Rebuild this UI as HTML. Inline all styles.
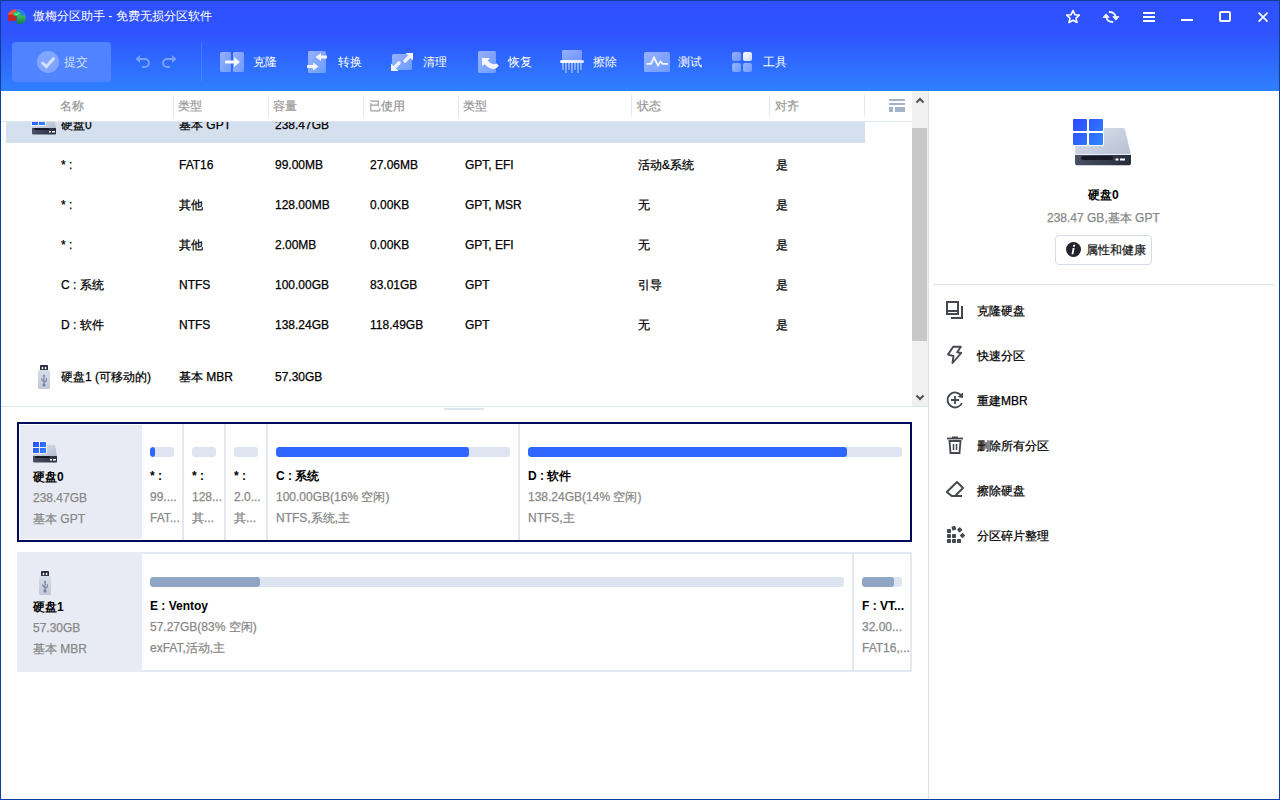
<!DOCTYPE html><html><head><meta charset="utf-8"><style>
*{box-sizing:border-box}
html,body{margin:0;padding:0;width:1280px;height:800px;overflow:hidden;background:#fff}
body{font-family:"Liberation Sans",sans-serif;font-size:12px;color:#1a1a1a;position:relative}
.a{position:absolute;white-space:nowrap;line-height:14px;-webkit-text-stroke-width:0.25px}
svg{position:absolute;overflow:visible}
#top{position:absolute;left:0;top:0;width:1280px;height:91px;background:linear-gradient(180deg,#2f50ff 0px,#2f53ff 32px,#2e80ff 91px)}
#bd{position:absolute;left:0;top:0;width:1280px;height:800px;border:1px solid #0b3f9f;z-index:50}
.tb{color:#fff;-webkit-text-stroke-width:0}
.hd{color:#9a9a9a}
.c{color:#000}
.hs{position:absolute;top:95px;width:1px;height:22px;background:#e3e8ef}
.card{position:absolute;left:17px;width:895px;height:120px}
.lp{position:absolute;background:#e8ebf3}
.sep{position:absolute;top:0;width:2px;height:120px;background:#e4e8f0}
.bar{position:absolute;top:25px;height:10px;border-radius:3px;background:#dfe5f0;overflow:hidden}
.bar i{position:absolute;left:0;top:0;bottom:0;border-radius:3px;background:#2f66ff}
.bar.g i{background:#8fa5c4}
.pn{position:absolute;font-weight:bold;color:#000;-webkit-text-stroke-width:0}
.ps{position:absolute;color:#888}
.mi{position:absolute;left:977px;color:#000}
</style></head><body>
<div id="top"></div><div id="bd"></div>
<svg width="0" height="0" style="position:absolute"><defs><linearGradient id="ti" x1="0" y1="0" x2="1" y2="1"><stop offset="0" stop-color="#fff" stop-opacity="0.5"/><stop offset="1" stop-color="#fff" stop-opacity="0.3"/></linearGradient><linearGradient id="tw" x1="0" y1="0" x2="1" y2="1"><stop offset="0" stop-color="#fff"/><stop offset="1" stop-color="#c8d6ff"/></linearGradient><linearGradient id="tb2" x1="0" y1="0" x2="1" y2="0"><stop offset="0" stop-color="#fff"/><stop offset="1" stop-color="#dde6ff"/></linearGradient></defs></svg>
<svg style="left:7px;top:8px" width="20" height="18" viewBox="0 0 20 18">
<defs><linearGradient id="lg" x1="0" y1="0" x2="0" y2="1"><stop offset="0" stop-color="#35c060"/><stop offset="1" stop-color="#17773a"/></linearGradient></defs>
<path d="M1 6 C2 3 6 1.3 9.5 1 L9.5 8 L1 8 Z" fill="#ff4a40"/>
<path d="M1 6.5 L9.5 7 L9.5 12.5 L1 13.5 Z" fill="#c0292a"/>
<path d="M9.5 1 C14 1 18 3 18.5 6.5 L18.5 8 L9.5 8 Z" fill="#2a7ee8"/>
<path d="M10 7.5 L18.5 7.5 L18.5 12.5 C17 15 14 16 10 16.5 Z" fill="url(#lg)"/>
<ellipse cx="10" cy="5.8" rx="4" ry="2.4" fill="#22c45c"/>
<path d="M8.2 5.9 L9.6 6.9 L11.6 4.9" stroke="#e0ffe6" stroke-width="0.9" fill="none"/>
</svg>
<div class="a tb" style="left:33px;top:9px">傲梅分区助手 - 免费无损分区软件</div>
<svg style="left:1064px;top:8px" width="18" height="18" viewBox="0 0 18 18">
<path d="M9 2.6 L10.9 6.7 L15.3 7.1 L12 10.1 L13 14.5 L9 12.2 L5 14.5 L6 10.1 L2.7 7.1 L7.1 6.7 Z" fill="none" stroke="#fff" stroke-width="1.6" stroke-linejoin="round"/>
</svg>
<svg style="left:1098px;top:6px" width="26" height="22" viewBox="0 0 26 22">
<path d="M11.5 6 A6.5 6.5 0 0 1 17.8 11" fill="none" stroke="#f0f2ff" stroke-width="1.8" stroke-linecap="round"/>
<path d="M14.8 10.6 L21 10.6 L17.9 14.2 Z" fill="#f0f2ff" stroke="#f0f2ff" stroke-width="0.8" stroke-linejoin="round"/>
<path d="M14.5 16 A6.5 6.5 0 0 1 8.2 11" fill="none" stroke="#f0f2ff" stroke-width="1.8" stroke-linecap="round"/>
<path d="M5 11.4 L11.2 11.4 L8.1 7.8 Z" fill="#f0f2ff" stroke="#f0f2ff" stroke-width="0.8" stroke-linejoin="round"/>
</svg>
<div class="a" style="left:1143px;top:12px;width:12px;height:2px;background:#fff"></div>
<div class="a" style="left:1143px;top:16px;width:12px;height:2px;background:#fff"></div>
<div class="a" style="left:1143px;top:20px;width:12px;height:2px;background:#fff"></div>
<div class="a" style="left:1181px;top:19px;width:12px;height:2px;background:#fff"></div>
<div class="a" style="left:1219px;top:11px;width:12px;height:11px;border:2px solid #f4f5ff;border-radius:2px"></div>
<svg style="left:1257px;top:11px" width="12" height="12" viewBox="0 0 12 12">
<path d="M1.6 1.6 L10.6 10.6 M10.6 1.6 L1.6 10.6" stroke="#f4f5ff" stroke-width="1.8"/></svg>
<div class="a" style="left:12px;top:42px;width:99px;height:40px;border-radius:4px;background:#4f83ff"></div>
<svg style="left:37px;top:51px" width="22" height="22" viewBox="0 0 22 22">
<circle cx="11" cy="11" r="11" fill="#80a5ff"/>
<path d="M4.8 11.4 L9.4 15.6 L17.4 6.8" fill="none" stroke="#d2dfff" stroke-width="3"/>
</svg>
<div class="a tb" style="left:64px;top:55px;color:#d4e0ff">提交</div>
<svg style="left:135px;top:54px" width="16" height="14" viewBox="0 0 16 14">
<path d="M4 5 L10 5 A4 4 0 0 1 10 13 L7 13" fill="none" stroke="#77a0ff" stroke-width="2"/>
<path d="M0.5 5 L5 1 L5 9 Z" fill="#77a0ff"/></svg>
<svg style="left:161px;top:54px" width="16" height="14" viewBox="0 0 16 14">
<path d="M12 5 L6 5 A4 4 0 0 0 6 13 L9 13" fill="none" stroke="#77a0ff" stroke-width="2"/>
<path d="M15.5 5 L11 1 L11 9 Z" fill="#77a0ff"/></svg>
<div class="a" style="left:201px;top:42px;width:1px;height:39px;background:rgba(255,255,255,0.13)"></div>
<svg style="left:220px;top:52px" width="25" height="20" viewBox="0 0 25 20">
<rect x="0" y="0" width="11" height="20" rx="1.5" fill="url(#ti)"/>
<rect x="13" y="0" width="11" height="20" rx="1.5" fill="url(#ti)"/>
<path d="M5 8.5 L14 8.5 L14 5 L20 10 L14 15 L14 11.5 L5 11.5 Z" fill="#f4f6ff"/></svg>
<div class="a tb" style="left:253px;top:55px">克隆</div>
<svg style="left:307px;top:51px" width="22" height="22" viewBox="0 0 22 22">
<rect x="1" y="0" width="18" height="22" rx="1.5" fill="url(#ti)"/>
<path d="M20 4.5 L14 4.5 L14 2 L8.5 6 L14 10 L14 7.5 L20 7.5 Z" fill="#f4f6ff"/>
<path d="M0 14 L6 14 L6 11.5 L11.5 15.5 L6 19.5 L6 17 L0 17 Z" fill="#f4f6ff"/></svg>
<div class="a tb" style="left:338px;top:55px">转换</div>
<svg style="left:391px;top:52px" width="23" height="20" viewBox="0 0 23 20">
<rect x="1" y="2" width="20" height="16" rx="1.5" fill="url(#ti)"/>
<path d="M22 1 L22 8.5 L14.5 1 Z" fill="#f4f6ff"/>
<path d="M18.5 4.5 L14 9" stroke="#eaeefe" stroke-width="3.6" stroke-linecap="round"/>
<path d="M0 19 L0 11.5 L7.5 19 Z" fill="#f4f6ff"/>
<path d="M3.5 15.5 L8 11" stroke="#eaeefe" stroke-width="3.6" stroke-linecap="round"/></svg>
<div class="a tb" style="left:423px;top:55px">清理</div>
<svg style="left:478px;top:51px" width="22" height="22" viewBox="0 0 22 22">
<rect x="0" y="0" width="18" height="22" rx="1.5" fill="url(#ti)"/>
<path d="M4 7 L12 7 L9.8 9.6 C12 12.5 15 14.2 18.6 12.4 L20.8 14.8 C18 19 12 19.5 7 13.2 L4 15 Z" fill="#f4f6ff"/></svg>
<div class="a tb" style="left:508px;top:55px">恢复</div>
<svg style="left:560px;top:50px" width="24" height="24" viewBox="0 0 24 24">
<rect x="2" y="0" width="20" height="10" rx="1.5" fill="url(#ti)"/>
<rect x="0" y="10" width="24" height="3" rx="1.5" fill="url(#tb2)"/>
<g fill="url(#ti)"><rect x="2" y="13" width="2" height="7"/><rect x="5" y="13" width="2" height="10"/><rect x="8" y="13" width="2" height="7"/><rect x="11" y="13" width="2" height="10"/><rect x="14" y="13" width="2" height="7"/><rect x="17" y="13" width="2" height="10"/><rect x="20" y="13" width="2" height="7"/></g></svg>
<div class="a tb" style="left:593px;top:55px">擦除</div>
<svg style="left:644px;top:52px" width="26" height="20" viewBox="0 0 26 20">
<rect x="0" y="0" width="26" height="20" rx="1.5" fill="url(#ti)"/>
<path d="M2.5 11.8 L7 11.8 L10 5.5 L14 13.5 L16.5 9.5 L18.5 11.8 L24 11.8" fill="none" stroke="#f4f6ff" stroke-width="1.8"/></svg>
<div class="a tb" style="left:678px;top:55px">测试</div>
<svg style="left:732px;top:52px" width="20" height="20" viewBox="0 0 20 20">
<rect x="0" y="0" width="9" height="9" rx="2" fill="url(#ti)"/>
<rect x="11" y="0" width="9" height="9" rx="2" fill="url(#tw)"/>
<rect x="0" y="11" width="9" height="9" rx="2" fill="url(#ti)"/>
<rect x="11" y="11" width="9" height="9" rx="2" fill="url(#ti)"/></svg>
<div class="a tb" style="left:763px;top:55px">工具</div>
<div class="a" style="left:6px;top:104px;width:859px;height:39px;background:#d5e0ef"></div>
<svg style="left:32px;top:114px" width="25" height="21" viewBox="0 0 25 21">
<defs><linearGradient id="r0b" x1="0" y1="0" x2="1" y2="1"><stop offset="0" stop-color="#dfe3ec"/><stop offset="1" stop-color="#b3bcd0"/></linearGradient>
<linearGradient id="r0k" x1="0" y1="0" x2="1" y2="0"><stop offset="0" stop-color="#4a5063"/><stop offset="1" stop-color="#2a2f40"/></linearGradient>
<linearGradient id="r0w" gradientUnits="userSpaceOnUse" x1="0" y1="0" x2="13" y2="11"><stop offset="0" stop-color="#2b48ff"/><stop offset="1" stop-color="#3288ff"/></linearGradient></defs>
<path d="M2 3 L21 3 C22 3 22.2 3.5 22.4 4.5 L24 14 L0 14 L1 4.5 C1.1 3.5 1.5 3 2 3 Z" fill="url(#r0b)"/>
<path d="M0 14 L24 14 L24 19 C24 20 23.5 20.5 22.5 20.5 L1.5 20.5 C0.5 20.5 0 20 0 19 Z" fill="url(#r0k)"/>
<rect x="2" y="14" width="15" height="2" rx="1" fill="#161a26"/>
<rect x="17" y="17" width="2" height="1.5" fill="#fff"/><rect x="20" y="17" width="3" height="1.5" fill="#fff"/>
<rect x="-1" y="-1" width="15" height="13" fill="#fff" opacity="0.6"/>
<g fill="url(#r0w)"><rect x="0" y="0" width="6" height="5"/><rect x="7" y="0" width="6" height="5"/>
<rect x="0" y="6" width="6" height="5"/><rect x="7" y="6" width="6" height="5"/></g>
</svg>
<div class="a c" style="left:61px;top:118px">硬盘0</div>
<div class="a c" style="left:179px;top:118px">基本 GPT</div>
<div class="a c" style="left:275px;top:118px">238.47GB</div>
<div class="a" style="left:1px;top:91px;width:911px;height:30px;background:#fff"></div>
<div class="a" style="left:1px;top:121px;width:910px;height:1px;background:#dfe5ee"></div>
<div class="a hd" style="left:60px;top:99px">名称</div>
<div class="a hd" style="left:178px;top:99px">类型</div>
<div class="a hd" style="left:273px;top:99px">容量</div>
<div class="a hd" style="left:369px;top:99px">已使用</div>
<div class="a hd" style="left:463px;top:99px">类型</div>
<div class="a hd" style="left:637px;top:99px">状态</div>
<div class="a hd" style="left:775px;top:99px">对齐</div>
<div class="hs" style="left:173px"></div>
<div class="hs" style="left:268px"></div>
<div class="hs" style="left:363px"></div>
<div class="hs" style="left:458px"></div>
<div class="hs" style="left:631px"></div>
<div class="hs" style="left:769px"></div>
<div class="hs" style="left:864px"></div>
<svg style="left:889px;top:99px" width="17" height="14" viewBox="0 0 17 14">
<g fill="#a5b3c9"><rect x="0" y="0" width="16" height="2"/><rect x="0" y="4" width="16" height="2"/><rect x="0" y="8" width="4" height="5"/><rect x="6" y="8" width="10" height="5"/></g></svg>
<div class="a c" style="left:61px;top:158px">* :</div>
<div class="a c" style="left:179px;top:158px">FAT16</div>
<div class="a c" style="left:275px;top:158px">99.00MB</div>
<div class="a c" style="left:370px;top:158px">27.06MB</div>
<div class="a c" style="left:465px;top:158px">GPT, EFI</div>
<div class="a c" style="left:638px;top:158px">活动&系统</div>
<div class="a c" style="left:776px;top:158px">是</div>
<div class="a c" style="left:61px;top:198px">* :</div>
<div class="a c" style="left:179px;top:198px">其他</div>
<div class="a c" style="left:275px;top:198px">128.00MB</div>
<div class="a c" style="left:370px;top:198px">0.00KB</div>
<div class="a c" style="left:465px;top:198px">GPT, MSR</div>
<div class="a c" style="left:638px;top:198px">无</div>
<div class="a c" style="left:776px;top:198px">是</div>
<div class="a c" style="left:61px;top:238px">* :</div>
<div class="a c" style="left:179px;top:238px">其他</div>
<div class="a c" style="left:275px;top:238px">2.00MB</div>
<div class="a c" style="left:370px;top:238px">0.00KB</div>
<div class="a c" style="left:465px;top:238px">GPT, EFI</div>
<div class="a c" style="left:638px;top:238px">无</div>
<div class="a c" style="left:776px;top:238px">是</div>
<div class="a c" style="left:61px;top:278px">C : 系统</div>
<div class="a c" style="left:179px;top:278px">NTFS</div>
<div class="a c" style="left:275px;top:278px">100.00GB</div>
<div class="a c" style="left:370px;top:278px">83.01GB</div>
<div class="a c" style="left:465px;top:278px">GPT</div>
<div class="a c" style="left:638px;top:278px">引导</div>
<div class="a c" style="left:776px;top:278px">是</div>
<div class="a c" style="left:61px;top:318px">D : 软件</div>
<div class="a c" style="left:179px;top:318px">NTFS</div>
<div class="a c" style="left:275px;top:318px">138.24GB</div>
<div class="a c" style="left:370px;top:318px">118.49GB</div>
<div class="a c" style="left:465px;top:318px">GPT</div>
<div class="a c" style="left:638px;top:318px">无</div>
<div class="a c" style="left:776px;top:318px">是</div>
<svg style="left:38px;top:365px" width="13" height="25" viewBox="0 0 13 25">
<defs><linearGradient id="ub" x1="0" y1="0" x2="0" y2="1"><stop offset="0" stop-color="#d8dde8"/><stop offset="1" stop-color="#c0c7d9"/></linearGradient></defs>
<rect x="2" y="0" width="8" height="5.5" rx="1" fill="#23283a"/>
<rect x="3.7" y="1.8" width="1.5" height="2.4" fill="#fff"/><rect x="6.8" y="1.8" width="1.5" height="2.4" fill="#fff"/>
<rect x="0" y="5" width="12" height="19" rx="1.5" fill="url(#ub)"/>
<path d="M6 10.5 L6 19.5 M6 16.5 L3.8 15 L3.8 13.2 M6 17.5 L8.3 16 L8.3 13.2" stroke="#7581a0" stroke-width="1.1" fill="none"/>
<path d="M4.7 11.2 L7.3 11.2 L6 9.2 Z" fill="#7581a0"/>
<circle cx="6" cy="20" r="1.5" fill="#7581a0"/></svg>
<div class="a c" style="left:61px;top:370px">硬盘1 (可移动的)</div>
<div class="a c" style="left:179px;top:370px">基本 MBR</div>
<div class="a c" style="left:275px;top:370px">57.30GB</div>
<div class="a" style="left:912px;top:91px;width:16px;height:315px;background:#f0f0f0"></div>
<div class="a" style="left:912px;top:128px;width:15px;height:213px;background:#c8c8c8"></div>
<svg style="left:915px;top:96px" width="10" height="8" viewBox="0 0 10 8">
<path d="M1.5 6.5 L5 3 L8.5 6.5" fill="none" stroke="#505050" stroke-width="2"/></svg>
<svg style="left:915px;top:394px" width="10" height="8" viewBox="0 0 10 8">
<path d="M1.5 1.5 L5 5 L8.5 1.5" fill="none" stroke="#505050" stroke-width="2"/></svg>
<div class="a" style="left:1px;top:406px;width:927px;height:1px;background:#dfe5ee"></div>
<div class="a" style="left:444px;top:408px;width:40px;height:2px;background:#dde3ef"></div>
<div class="card" style="top:422px;border:2px solid #000a5a;background:#fff">
<div class="lp" style="left:1px;top:1px;width:122px;height:114px"></div>
</div>
<svg style="left:33px;top:442px" width="25" height="21" viewBox="0 0 25 21">
<defs><linearGradient id="c0b" x1="0" y1="0" x2="1" y2="1"><stop offset="0" stop-color="#dfe3ec"/><stop offset="1" stop-color="#b3bcd0"/></linearGradient>
<linearGradient id="c0k" x1="0" y1="0" x2="1" y2="0"><stop offset="0" stop-color="#4a5063"/><stop offset="1" stop-color="#2a2f40"/></linearGradient>
<linearGradient id="c0w" gradientUnits="userSpaceOnUse" x1="0" y1="0" x2="13" y2="11"><stop offset="0" stop-color="#2b48ff"/><stop offset="1" stop-color="#3288ff"/></linearGradient></defs>
<path d="M2 3 L21 3 C22 3 22.2 3.5 22.4 4.5 L24 14 L0 14 L1 4.5 C1.1 3.5 1.5 3 2 3 Z" fill="url(#c0b)"/>
<path d="M0 14 L24 14 L24 19 C24 20 23.5 20.5 22.5 20.5 L1.5 20.5 C0.5 20.5 0 20 0 19 Z" fill="url(#c0k)"/>
<rect x="2" y="14" width="15" height="2" rx="1" fill="#161a26"/>
<rect x="17" y="17" width="2" height="1.5" fill="#fff"/><rect x="20" y="17" width="3" height="1.5" fill="#fff"/>
<rect x="-1" y="-1" width="15" height="13" fill="#fff" opacity="0.6"/>
<g fill="url(#c0w)"><rect x="0" y="0" width="6" height="5"/><rect x="7" y="0" width="6" height="5"/>
<rect x="0" y="6" width="6" height="5"/><rect x="7" y="6" width="6" height="5"/></g>
</svg>
<div class="a pn" style="left:33px;top:470px">硬盘0</div>
<div class="a ps" style="left:33px;top:491px">238.47GB</div>
<div class="a ps" style="left:33px;top:512px">基本 GPT</div>
<div class="a" style="left:182px;top:424px;width:2px;height:116px;background:#e4e8f0"></div>
<div class="a" style="left:224px;top:424px;width:2px;height:116px;background:#e4e8f0"></div>
<div class="a" style="left:266px;top:424px;width:2px;height:116px;background:#e4e8f0"></div>
<div class="a" style="left:518px;top:424px;width:2px;height:116px;background:#e4e8f0"></div>
<div class="a bar" style="left:150px;top:447px;width:24px"><i style="width:5px"></i></div>
<div class="a pn" style="left:150px;top:469px">* :</div>
<div class="a ps" style="left:150px;top:490px">99....</div>
<div class="a ps" style="left:150px;top:511px">FAT...</div>
<div class="a bar" style="left:192px;top:447px;width:24px"><i style="width:0px"></i></div>
<div class="a pn" style="left:192px;top:469px">* :</div>
<div class="a ps" style="left:192px;top:490px">128...</div>
<div class="a ps" style="left:192px;top:511px">其...</div>
<div class="a bar" style="left:234px;top:447px;width:24px"><i style="width:0px"></i></div>
<div class="a pn" style="left:234px;top:469px">* :</div>
<div class="a ps" style="left:234px;top:490px">2.0...</div>
<div class="a ps" style="left:234px;top:511px">其...</div>
<div class="a bar" style="left:276px;top:447px;width:234px"><i style="width:193px"></i></div>
<div class="a pn" style="left:276px;top:469px">C : 系统</div>
<div class="a ps" style="left:276px;top:490px">100.00GB(16% 空闲)</div>
<div class="a ps" style="left:276px;top:511px">NTFS,系统,主</div>
<div class="a bar" style="left:528px;top:447px;width:374px"><i style="width:319px"></i></div>
<div class="a pn" style="left:528px;top:469px">D : 软件</div>
<div class="a ps" style="left:528px;top:490px">138.24GB(14% 空闲)</div>
<div class="a ps" style="left:528px;top:511px">NTFS,主</div>
<div class="card" style="top:552px;border:2px solid #e4e8f0;background:#fff">
<div class="lp" style="left:-2px;top:-2px;width:125px;height:120px"></div>
</div>
<div class="a" style="left:852px;top:554px;width:2px;height:116px;background:#e4e8f0"></div>
<svg style="left:39px;top:571px" width="13" height="25" viewBox="0 0 13 25">
<defs><linearGradient id="ub2" x1="0" y1="0" x2="0" y2="1"><stop offset="0" stop-color="#d8dde8"/><stop offset="1" stop-color="#c0c7d9"/></linearGradient></defs>
<rect x="2" y="0" width="8" height="5.5" rx="1" fill="#23283a"/>
<rect x="3.7" y="1.8" width="1.5" height="2.4" fill="#fff"/><rect x="6.8" y="1.8" width="1.5" height="2.4" fill="#fff"/>
<rect x="0" y="5" width="12" height="19" rx="1.5" fill="url(#ub2)"/>
<path d="M6 10.5 L6 19.5 M6 16.5 L3.8 15 L3.8 13.2 M6 17.5 L8.3 16 L8.3 13.2" stroke="#7581a0" stroke-width="1.1" fill="none"/>
<path d="M4.7 11.2 L7.3 11.2 L6 9.2 Z" fill="#7581a0"/>
<circle cx="6" cy="20" r="1.5" fill="#7581a0"/></svg>
<div class="a pn" style="left:33px;top:600px">硬盘1</div>
<div class="a ps" style="left:33px;top:621px">57.30GB</div>
<div class="a ps" style="left:33px;top:642px">基本 MBR</div>
<div class="a bar g" style="left:150px;top:577px;width:694px"><i style="width:110px"></i></div>
<div class="a pn" style="left:150px;top:599px">E : Ventoy</div>
<div class="a ps" style="left:150px;top:620px">57.27GB(83% 空闲)</div>
<div class="a ps" style="left:150px;top:641px">exFAT,活动,主</div>
<div class="a bar g" style="left:862px;top:577px;width:40px"><i style="width:32px"></i></div>
<div class="a pn" style="left:862px;top:599px">F : VT...</div>
<div class="a ps" style="left:862px;top:620px">32.00...</div>
<div class="a ps" style="left:862px;top:641px">FAT16,...</div>
<div class="a" style="left:928px;top:91px;width:1px;height:709px;background:#dde3ee"></div>
<svg style="left:1072px;top:118px" width="60" height="48" viewBox="0 0 60 48">
<defs><linearGradient id="bb" x1="0" y1="0" x2="1" y2="1"><stop offset="0" stop-color="#dde2ec"/><stop offset="1" stop-color="#b6bfd2"/></linearGradient>
<linearGradient id="bk" x1="0" y1="0" x2="1" y2="0"><stop offset="0" stop-color="#4a5065"/><stop offset="1" stop-color="#262b3b"/></linearGradient>
<linearGradient id="wb" gradientUnits="userSpaceOnUse" x1="1" y1="1" x2="31" y2="27"><stop offset="0" stop-color="#2c46ff"/><stop offset="1" stop-color="#3288ff"/></linearGradient></defs>
<path d="M4 10 L51 10 C52.5 10 53 11 53.3 12.5 L59 37 L3 37 Z" fill="url(#bb)"/>
<path d="M3 37 L59 37 L59 45 C59 46.5 58 47.3 56.5 47.3 L5.5 47.3 C4 47.3 3 46.5 3 45 Z" fill="url(#bk)"/>
<path d="M3 36.5 L59 36.5" stroke="#e9edf5" stroke-width="1"/>
<rect x="9" y="38" width="32" height="4" rx="2" fill="#161a26"/>
<rect x="43.5" y="40.5" width="3" height="2" fill="#fff"/><rect x="48" y="40.5" width="5" height="2" fill="#fff"/>
<rect x="-1" y="-1" width="33" height="29" fill="#fff"/>
<rect x="1" y="1" width="14" height="12" rx="1" fill="url(#wb)"/><rect x="17" y="1" width="14" height="12" rx="1" fill="url(#wb)"/>
<rect x="1" y="15" width="14" height="12" rx="1" fill="url(#wb)"/><rect x="17" y="15" width="14" height="12" rx="1" fill="url(#wb)"/>
</svg>
<div class="a" style="left:1088px;top:188px;font-weight:bold;color:#000;-webkit-text-stroke-width:0">硬盘0</div>
<div class="a" style="left:1047px;top:211px;color:#888">238.47 GB,基本 GPT</div>
<div class="a" style="left:1055px;top:235px;width:97px;height:30px;border:1px solid #d5dce8;border-radius:4px;background:#fff"></div>
<svg style="left:1066px;top:242px" width="15" height="15" viewBox="0 0 15 15">
<circle cx="7.5" cy="7.5" r="7.5" fill="#22252d"/>
<path d="M9.2 2.8 L8.8 4.8 L6.9 4.8 L7.3 2.8 Z M8.6 6 L7.4 12.2 L5.5 12.2 L6.7 6 Z" fill="#fff"/></svg>
<div class="a" style="left:1086px;top:243px;color:#1a1a1a">属性和健康</div>
<div class="a" style="left:933px;top:284px;width:342px;height:1px;background:#dde3ee"></div>
<svg style="left:945px;top:300px" width="20" height="20" viewBox="0 0 20 20">
<g fill="#45484f"><rect x="1" y="1" width="13" height="2"/><rect x="1" y="1" width="2" height="14"/><rect x="12" y="1" width="2" height="14"/><rect x="1" y="13" width="13" height="2"/><rect x="1" y="10" width="13" height="2"/>
<rect x="16" y="6" width="2" height="13"/><rect x="6" y="17" width="12" height="2"/></g></svg>
<svg style="left:945px;top:345px" width="20" height="20" viewBox="0 0 20 20">
<path d="M8.2 1.8 L15.8 1.8 L12.2 7.2 L16.2 8 L7.5 18 L8.5 11 L3 9.6 Z" fill="none" stroke="#45484f" stroke-width="1.9" stroke-linejoin="round"/></svg>
<svg style="left:945px;top:390px" width="20" height="20" viewBox="0 0 20 20">
<path d="M16.5 6 A7.5 7.5 0 1 0 17 13" fill="none" stroke="#45484f" stroke-width="1.8"/>
<path d="M18 2.5 L18 8 L12.5 7 Z" fill="#45484f"/>
<path d="M10 6 L10 14 M6 10 L14 10" stroke="#45484f" stroke-width="1.8"/></svg>
<svg style="left:945px;top:435px" width="20" height="20" viewBox="0 0 20 20">
<path d="M2 3.5 L18 3.5" stroke="#45484f" stroke-width="1.8"/>
<path d="M7 2.5 L13 2.5" stroke="#45484f" stroke-width="2"/>
<path d="M4.5 6 L15.5 6 L14.5 18 L5.5 18 Z" fill="none" stroke="#45484f" stroke-width="1.8"/>
<path d="M8.5 9 L8.5 15 M11.5 9 L11.5 15" stroke="#45484f" stroke-width="1.5"/></svg>
<svg style="left:945px;top:480px" width="20" height="20" viewBox="0 0 20 20">
<path d="M1.8 12 L12 2 L18 8 L10 16 L6.8 16 Z" fill="none" stroke="#45484f" stroke-width="2" stroke-linejoin="round"/>
<path d="M6.8 16 L17 16" stroke="#45484f" stroke-width="2"/></svg>
<svg style="left:945px;top:525px" width="22" height="20" viewBox="0 0 22 20">
<g fill="#45484f"><rect x="2" y="4" width="4" height="4" rx="0.7"/><rect x="2" y="9" width="4" height="4" rx="0.7"/><rect x="2" y="14" width="4" height="4" rx="0.7"/>
<rect x="7" y="9" width="4" height="4" rx="0.7"/><rect x="7" y="14" width="4" height="4" rx="0.7"/><rect x="12" y="14" width="4" height="4" rx="0.7"/>
<rect x="6.9" y="1.2" width="4" height="4" rx="0.7" transform="rotate(-15 8.9 3.2)"/>
<rect x="12.7" y="2.8" width="4" height="4" rx="0.7" transform="rotate(45 14.7 4.8)"/>
<rect x="15.5" y="8.5" width="4" height="4" rx="0.7" transform="rotate(45 17.5 10.5)"/></g></svg>
<div class="a mi" style="top:304px">克隆硬盘</div>
<div class="a mi" style="top:349px">快速分区</div>
<div class="a mi" style="top:394px">重建MBR</div>
<div class="a mi" style="top:439px">删除所有分区</div>
<div class="a mi" style="top:484px">擦除硬盘</div>
<div class="a mi" style="top:529px">分区碎片整理</div>
</body></html>
